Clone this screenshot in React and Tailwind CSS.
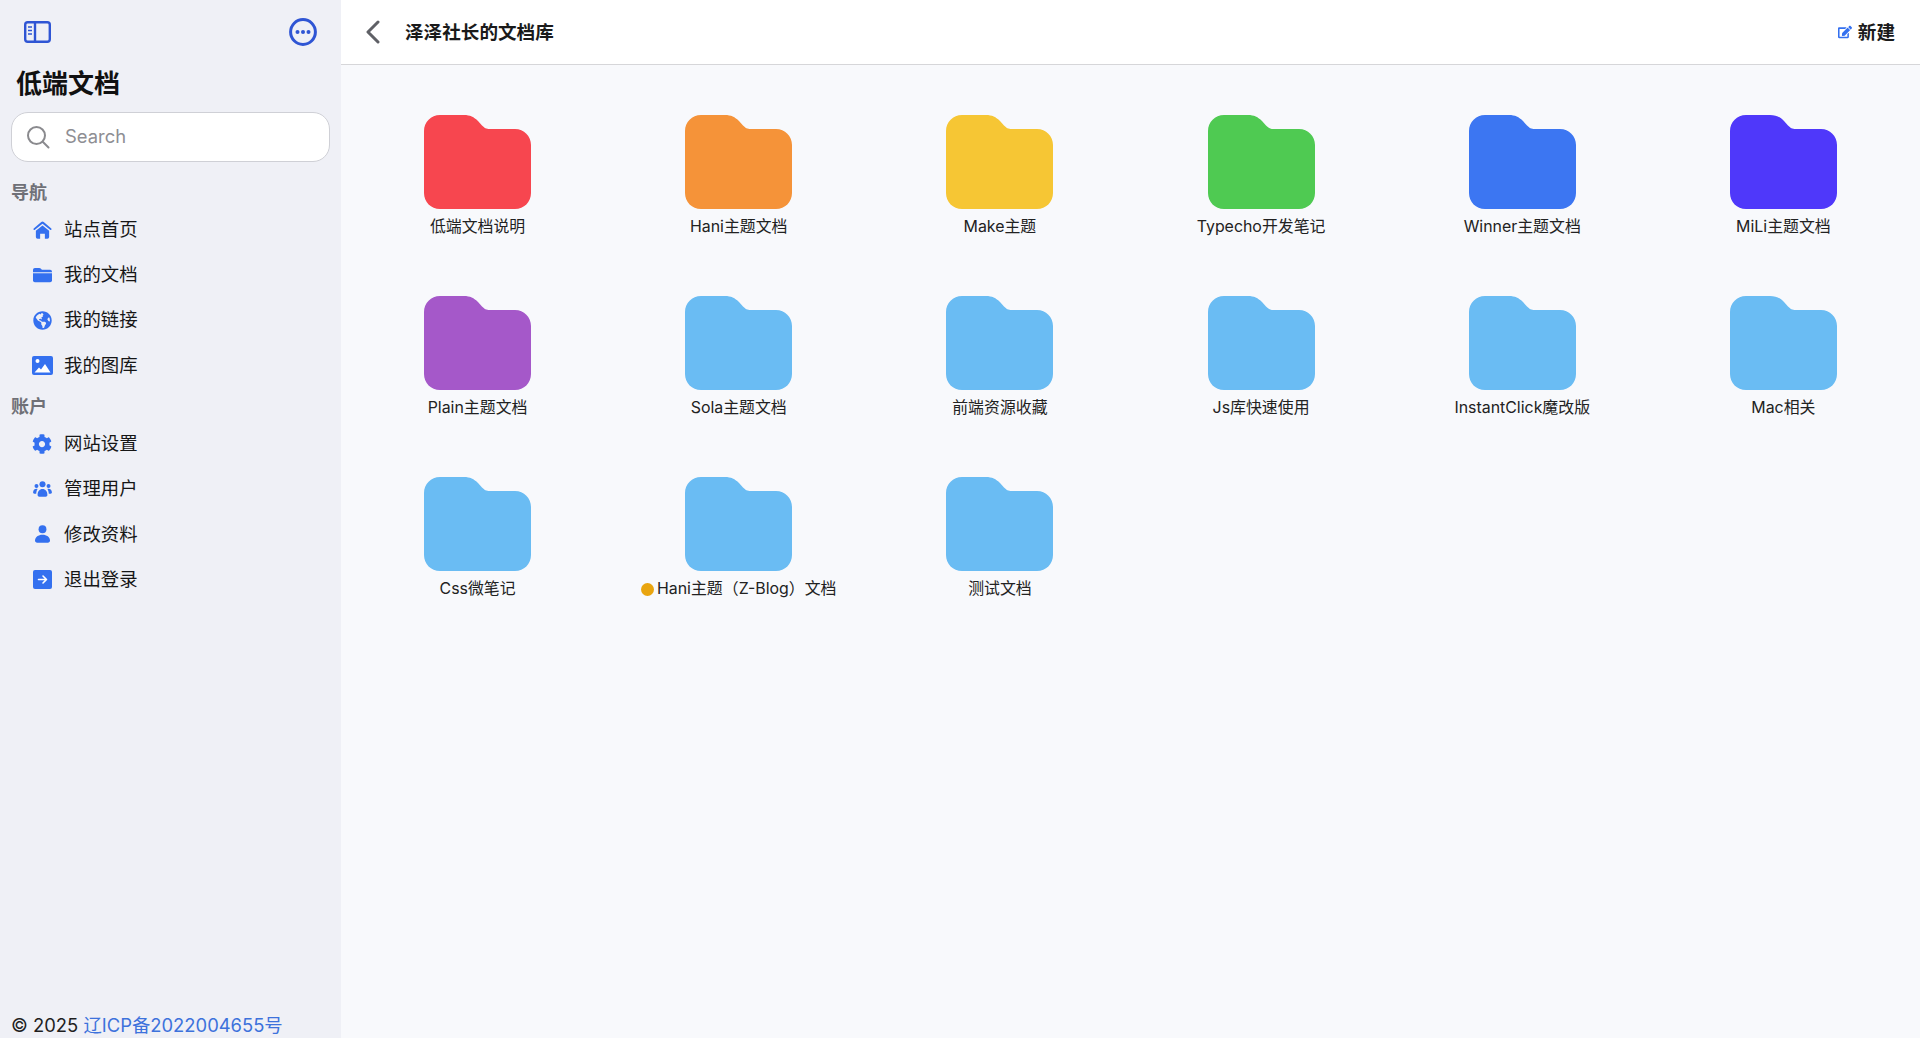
import React from 'react';
import { FaGlobeAmericas, FaCog, FaEdit } from 'react-icons/fa';

const HomeIcon = ({ className }) => (
    <svg viewBox="0 0 20 19" className={className} fill="currentColor">
        <path d="M10 .5c.5 0 .9.2 1.300.5l8 7c.6.5.2 1.500-.6 1.500-.3 0-.5-.1-.7-.2L10 3 2 9.300c-.2.1-.4.2-.7.2-.8 0-1.200-1-.6-1.500l8-7c.4-.3.800-.5 1.300-.5z" />
        <path d="M10 4.800l7 5.500V17a1.800 1.800 0 0 1-1.800 1.800H12.500V13.500h-5v5.300H4.800A1.800 1.800 0 0 1 3 17v-6.700z" />
    </svg>
);

const FolderSmall = ({ className }) => (
    <svg viewBox="0 0 20 16" className={className} fill="currentColor">
        <path d="M0 2.500A2 2 0 0 1 2 .5h4.600c.6 0 1.100.3 1.500.7L9.400 2.500H18a2 2 0 0 1 2 2V5H0z" />
        <path d="M0 6.200h20v7.300a2 2 0 0 1-2 2H2a2 2 0 0 1-2-2z" />
    </svg>
);

const ImageIcon = ({ className }) => (
    <svg viewBox="0 0 21 19" className={className}>
        <rect width="21" height="19" rx="2" fill="currentColor" />
        <circle cx="5.500" cy="5" r="2" fill="#fff" />
        <path d="M2.500 16.500l4.500-5 2 2 4-5.500 5.500 8.500z" fill="#fff" />
    </svg>
);

const UsersIcon = ({ className }) => (
    <svg viewBox="0 0 20 17" className={className} fill="currentColor">
        <circle cx="10" cy="3.400" r="3.200" />
        <circle cx="3.600" cy="5.400" r="2.100" />
        <circle cx="16.400" cy="5.400" r="2.100" />
        <path d="M4.800 15c0-4 2-6.500 5.200-6.500s5.200 2.500 5.200 6.500c0 1.200-.8 1.800-1.800 1.800H6.600c-1 0-1.800-.6-1.800-1.800z" />
        <path d="M3.600 8.300c-2.200 0-3.600 1.600-3.600 4 0 .8.500 1.200 1.300 1.200h2c.1-1.900.5-3.600 1.500-5-.4-.1-.8-.2-1.200-.2zM16.400 8.300c2.200 0 3.600 1.600 3.600 4 0 .8-.5 1.200-1.300 1.200h-2c-.1-1.900-.5-3.600-1.500-5 .4-.1.800-.2 1.200-.2z" />
    </svg>
);

const UserIcon = ({ className }) => (
    <svg viewBox="0 0 16 19" className={className} fill="currentColor">
        <circle cx="8" cy="4.400" r="4.200" />
        <path d="M8 10.200c4.500 0 8 2.500 8 6.300 0 1.500-1 2.300-2.300 2.300H2.300C1 18.800 0 18 0 16.500c0-3.800 3.500-6.300 8-6.300z" />
    </svg>
);

const ExitIcon = ({ className }) => (
    <svg viewBox="0 0 19 19" className={className}>
        <rect width="19" height="19" rx="2" fill="currentColor" />
        <path d="M5.500 9.500h7.500M10 6l3.500 3.500L10 13" fill="none" stroke="#fff" strokeWidth="1.600" strokeLinecap="round" strokeLinejoin="round" />
    </svg>
);

const navItems = [
    { icon: HomeIcon, label: '站点首页', size: 'w-[19px] h-[18px]' },
    { icon: FolderSmall, label: '我的文档', size: 'w-[19px] h-[16px]' },
    { icon: FaGlobeAmericas, label: '我的链接', size: 'w-[19px] h-[19px]' },
    { icon: ImageIcon, label: '我的图库', size: 'w-[21px] h-[19px]' },
];

const accountItems = [
    { icon: FaCog, label: '网站设置', size: 'w-[20px] h-[20px]' },
    { icon: UsersIcon, label: '管理用户', size: 'w-[19px] h-[16px]' },
    { icon: UserIcon, label: '修改资料', size: 'w-[15px] h-[18px]' },
    { icon: ExitIcon, label: '退出登录', size: 'w-[19px] h-[19px]' },
];

const folders = [
    { name: '低端文档说明', color: 'text-[#f7464f]' },
    { name: 'Hani主题文档', color: 'text-[#f59339]' },
    { name: 'Make主题', color: 'text-[#f6c634]' },
    { name: 'Typecho开发笔记', color: 'text-[#4fca52]' },
    { name: 'Winner主题文档', color: 'text-[#3c76f2]' },
    { name: 'MiLi主题文档', color: 'text-[#4f38fa]' },
    { name: 'Plain主题文档', color: 'text-[#a558c9]' },
    { name: 'Sola主题文档', color: 'text-[#6abcf3]' },
    { name: '前端资源收藏', color: 'text-[#6abcf3]' },
    { name: 'Js库快速使用', color: 'text-[#6abcf3]' },
    { name: 'InstantClick魔改版', color: 'text-[#6abcf3]' },
    { name: 'Mac相关', color: 'text-[#6abcf3]' },
    { name: 'Css微笔记', color: 'text-[#6abcf3]' },
    { name: 'Hani主题（Z-Blog）文档', color: 'text-[#6abcf3]', dot: true },
    { name: '测试文档', color: 'text-[#6abcf3]' },
];

const FolderIcon = ({ className }) => (
    <svg viewBox="0 0 107 94" className={className} fill="currentColor">
        <path d="M16 0H40C46 0 50 2 54 6L58 10.500C60.500 13 62 14 66 14H91C100 14 107 21 107 30V78C107 87 100 94 91 94H16C7 94 0 87 0 78V16C0 7 7 0 16 0Z" />
    </svg>
);

const SidebarRow = ({ item }) => (
    <div className="h-[45.3px] flex items-center pl-[20px]">
        <span className="w-[22px] flex items-center justify-center text-[#3470ef]">
            <item.icon className={item.size} />
        </span>
        <span className="ml-[11px] text-[18.4px] text-[#161616]">{item.label}</span>
    </div>
);

const App = () => {
    return (
        <div className="flex w-full h-[1038px] overflow-hidden font-['Inter','Noto_Sans_CJK_SC',sans-serif] bg-[#f8f9fc]">
            {/* Sidebar */}
            <aside className="w-[341px] shrink-0 h-full flex flex-col px-[11px] bg-[#eff0f6]">
                <div className="h-[64px] flex items-center justify-between pl-[13px] pr-[13px]">
                    <svg viewBox="0 0 27 22" className="w-[27px] h-[22px] text-[#2f55d4]" fill="none" stroke="currentColor">
                        <rect x="1.200" y="1.200" width="24.600" height="19.600" rx="2.500" strokeWidth="2.400" />
                        <path d="M11 1v20" strokeWidth="2.400" />
                        <path d="M4 6h4M4 9.500h4M4 13h4" strokeWidth="1.600" />
                    </svg>
                    <svg viewBox="0 0 28 28" className="w-[28px] h-[28px] text-[#2f55d4]" fill="none" stroke="currentColor">
                        <circle cx="14" cy="14" r="12.400" strokeWidth="3" />
                        <circle cx="8.500" cy="14" r="2" fill="currentColor" stroke="none" />
                        <circle cx="14" cy="14" r="2" fill="currentColor" stroke="none" />
                        <circle cx="19.500" cy="14" r="2" fill="currentColor" stroke="none" />
                    </svg>
                </div>
                <h1 className="h-[39px] mb-[9px] pl-[5px] flex items-center text-[26px] font-bold text-[#111]">低端文档</h1>
                <div className="h-[50px] flex items-center rounded-[17px] border border-[#cfd0d6] bg-white pl-[14px]">
                    <svg viewBox="0 0 24 24" className="w-[24px] h-[24px] text-[#8a8a8e]" fill="none" stroke="currentColor" strokeWidth="2" strokeLinecap="round">
                        <circle cx="10.500" cy="10.500" r="8.500" />
                        <path d="M17 17l5.500 5.500" />
                    </svg>
                    <span className="ml-[15px] text-[18.4px] text-[#8e8e93]">Search</span>
                </div>
                <div className="mt-[15px] h-[30px] flex items-center text-[18px] font-bold text-[#6f7077]">导航</div>
                {navItems.map((item) => <SidebarRow key={item.label} item={item} />)}
                <div className="mt-[3px] h-[30px] flex items-center text-[18px] font-bold text-[#6f7077]">账户</div>
                {accountItems.map((item) => <SidebarRow key={item.label} item={item} />)}
                <div className="mt-auto h-[26px] flex items-center text-[18.4px] leading-none text-[#1f1f1f] whitespace-pre">
                    © 2025 <span className="text-[#3d72dc]">辽ICP备2022004655号</span>
                </div>
            </aside>

            {/* Main */}
            <main className="flex-1 min-w-0 h-full flex flex-col">
                <header className="h-[65px] shrink-0 flex items-center justify-between bg-white border-b border-[#d6d6d9] pl-[25px] pr-[25px]">
                    <div className="flex items-center pt-[1px]">
                        <svg viewBox="0 0 14 24" className="w-[14px] h-[24px] text-[#5f6066]" fill="none" stroke="currentColor" strokeWidth="3" strokeLinecap="round" strokeLinejoin="round">
                            <path d="M12 2L2 12l10 10" />
                        </svg>
                        <span className="ml-[25px] text-[18.6px] font-bold text-[#1a1a1a]">泽泽社长的文档库</span>
                    </div>
                    <div className="flex items-center pt-[1px]">
                        <FaEdit className="w-[14px] h-[14px] text-[#3470ef]" />
                        <span className="ml-[6px] text-[18.6px] font-bold text-[#1a1a1a]">新建</span>
                    </div>
                </header>
                <div className="grid grid-cols-6 auto-rows-[181px] pt-[49.500px] px-[6px]">
                    {folders.map((folder) => (
                        <div key={folder.name} className="flex flex-col items-center">
                            <FolderIcon className={`w-[107px] h-[94px] ${folder.color}`} />
                            <div className="mt-[6.500px] h-[24px] flex items-center text-[15.900px] text-[#222] whitespace-nowrap">
                                {folder.dot && <span className="w-[13px] h-[13px] mr-[3px] rounded-full bg-[#e9a50f]" />}
                                {folder.name}
                            </div>
                        </div>
                    ))}
                </div>
            </main>
        </div>
    );
};

export default App;
